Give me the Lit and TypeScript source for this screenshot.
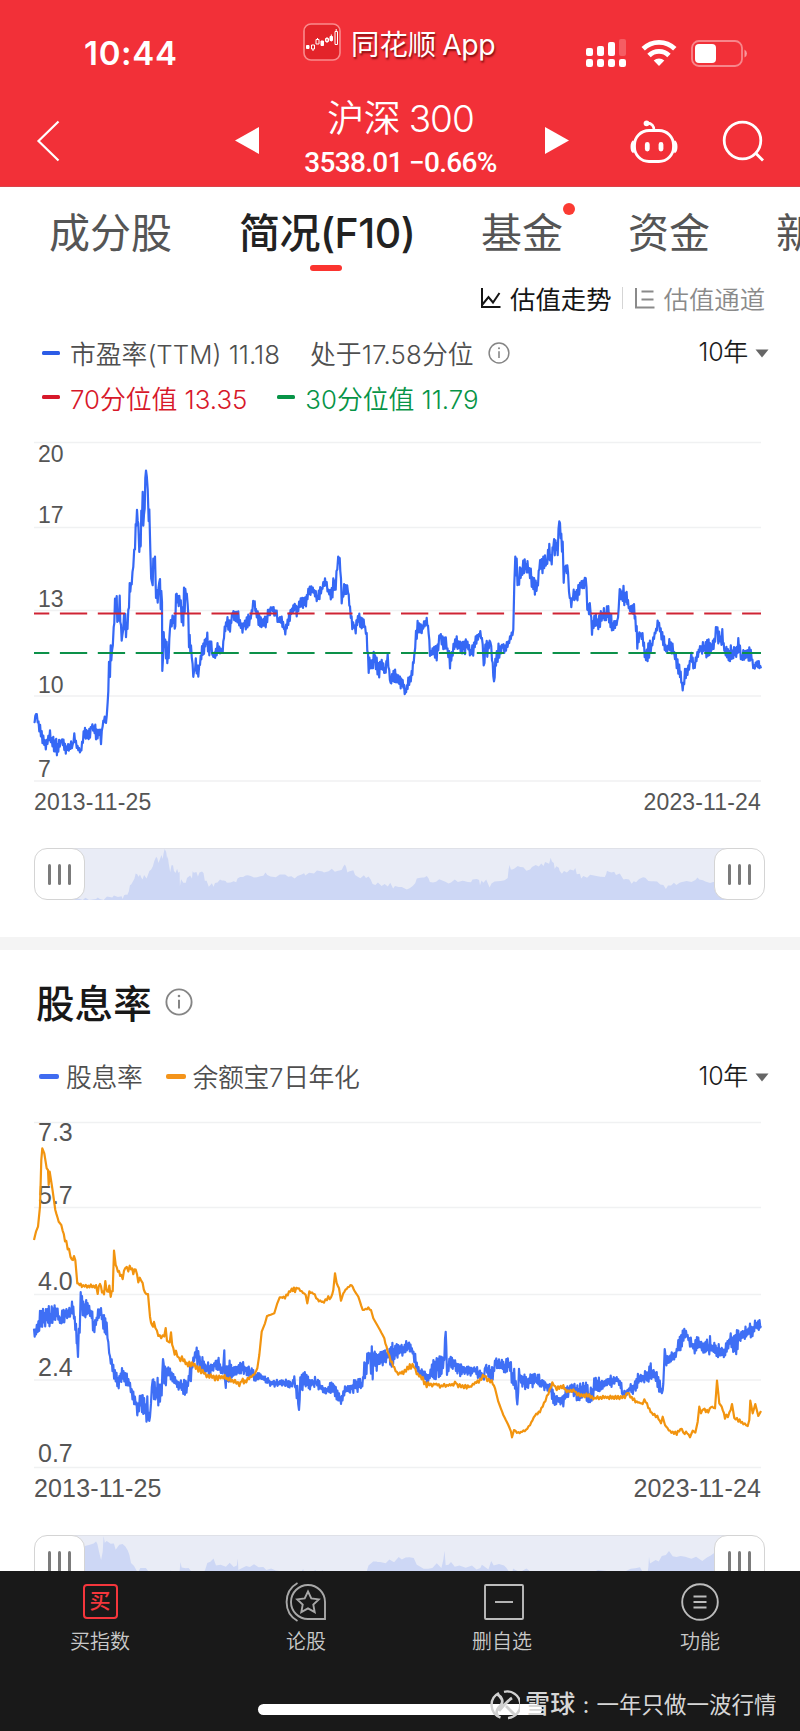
import { LitElement, html, svg, css } from "lit";
import { customElement, property } from "lit/decorators.js";

// Knots are [x, y, spread]; spread is the half-height of the daily noise around the knot.
type Knot = number[];

const parse = (s: string, dx: number): Knot[] =>
  s.trim().split(/\s+/).map((k) => {
    const [x, y, a] = k.split(",").map(Number);
    return [(x + dx) / 3, y / 3, (a || 0) / 3];
  });

const PE = [
  ...parse(`42,880,3 48,850,4 58,890,10 70,935,12 80,945,12 90,915,8 100,945,14 115,955,14 124,930,8 135,955,10 158,950,10 163,915,4 170,950,8 182,965,6
  193,912,12 210,915,10 215,890,8 228,905,14 240,905,12 243,940,5 248,885,6 254,865,6 258,880,3 263,820,3 267,720,15 270,690,30 276,670,20 281,600,20 285,540,30
  290,525,20 294,590,20 299,530,20 303,600,20 307,620,6 312,560,15 320,590,25 325,545,10 329,475,15 335,460,6 340,400,10 345,330,20 351,245,6 355,290,20 358,345,12
  364,300,35 368,210,15 372,300,25 374,200,20 378,120,2 383,165,10 386,290,10 388,230,10 391,370,20 396,490,20 400,400,20 405,385,4 408,490,20 413,510,10 418,450,10
  422,500,20 426,500,10 427,730,4 431,630,20 438,660,25 446,680,8 450,590,10 460,565,15 466,600,8 468,490,8 472,505,12 480,510,20 485,560,20 490,530,40 498,490,5
  503,520,10 507,630,20 513,650,10 520,735,12 530,695,20 535,735,10 540,690,12 548,665,12 556,635,18 562,630,15 568,650,15 574,640,10 578,680,8 590,665,12 600,660,15
  608,665,6 612,610,8 620,575,8 630,590,14 638,550,8 645,560,12 655,560,10 665,595,8 675,580,12 685,575,12 695,555,10 702,510,6 708,545,8 718,580,15 735,580,12
  748,545,10 752,535,8 765,545,8 775,570,10 785,575,10 796,605,6 805,570,10 818,535,12 826,525,10 830,550,8 842,520,12 858,520,10 867,480,8 885,485,8 890,510,8
  905,480,10 915,450,10 925,485,15 935,490,18 940,465,15 947,470,12 952,400,10 957,380,5 961,410,12 965,515,10 970,480,15 984,480,15 990,540,15 997,580,15
  1007,595,10 1018,560,12 1025,590,12 1033,580,12 1040,620,8 1046,705,15 1055,705,15 1063,680,12 1075,720,15 1085,705,12 1095,730,10 1103,680,5 1112,765,12
  1118,735,12 1130,740,12 1140,755,15`, 60),
  ...parse(`8,760,10 16,790,6 25,760,10 35,735,12 43,680,10 48,615,18 55,590,15 65,600,20 72,585,12 80,570,8 86,600,8 90,670,12 100,665,14 110,670,15 120,615,8
  130,645,12 140,650,15 150,695,12 158,665,12 170,630,10 180,655,15 195,650,12 200,640,10 212,670,12 222,660,12 227,630,8 241,610,8 248,635,8 251,715,6 256,650,15
  262,660,25 271,630,8 276,680,10 282,758,5 288,680,15 298,665,15 308,645,12 318,655,12 330,630,8 340,600,5 343,450,8 346,385,3 350,440,30 355,470,20 362,430,15
  372,410,15 380,410,15 390,430,18 400,470,15 412,465,12 418,410,12 430,395,18 440,400,18 448,370,15 455,390,15 460,345,18 473,350,22 478,270,8 482,320,12 488,360,15
  491,440,15 496,410,8 504,420,15 507,490,10 514,520,12 521,490,15 530,500,15 540,465,12 552,465,12 557,438,4 562,530,12 572,535,10 576,600,8 583,570,12 595,585,15
  605,555,15 625,555,15 638,585,12 652,575,10 656,540,8 659,475,4 663,500,18 673,495,20 682,505,15 688,540,12 700,530,12 706,565,12 712,640,25 720,610,10 730,630,15
  738,685,12 745,665,20 752,660,15 762,620,10 775,580,8 782,600,10 792,640,12 800,660,12 808,645,12 820,660,10 830,700,12 840,720,15 848,775,6 855,735,20 865,715,15
  874,680,8 882,710,8 892,680,8 900,655,15 915,655,15 930,655,15 943,640,15 950,585,8 955,630,15 967,625,15 975,665,12 990,670,15 1000,675,18 1015,650,15
  1025,690,12 1035,670,12 1050,670,12 1055,685,10 1062,715,10 1072,700,8 1083,715,8`, 1200),
];

const DIVIDEND = [
  ...parse(`42,660,10 48,668,10 60,630,20 80,622,20 95,620,18 108,605,12 122,635,14 135,610,14 150,615,12 158,585,15 162,620,12 168,660,25 174,735,6 179,640,50
  182,555,5 186,590,20 192,600,18 205,600,16 215,615,12 221,645,18 232,625,12 243,605,12 252,640,15 260,655,12 265,700,10 270,745,15 280,785,15 292,820,15
  300,800,15 308,785,12 318,800,14 330,825,12 340,860,12 352,890,15 362,880,15 370,885,15 382,905,28 390,930,6 393,870,10 398,805,4 402,850,25 415,845,22
  425,850,12 429,745,4 433,800,20 445,785,15 455,800,12 465,815,10 478,825,12 490,830,15 502,835,10 508,800,10 515,770,25 525,735,18 535,735,22 543,765,15
  558,775,12 575,775,12 587,760,12 600,775,15 610,785,20 613,720,2 615,815,15 622,785,20 640,785,15 652,780,8 665,770,10 680,782,8 695,790,10 705,802,8
  720,800,6 735,808,5 755,820,6 775,820,6 800,820,6 815,825,8 823,805,10 828,845,15 832,850,15 837,903,2 841,825,18 852,815,18 862,815,12 870,825,8 885,815,8
  900,830,8 918,845,10 930,830,12 945,840,10 957,865,10 965,870,10 975,840,12 988,835,12 1000,830,12 1015,825,12 1025,830,10 1033,785,20 1048,735,15
  1058,765,35 1062,740,12 1070,755,15 1088,748,15 1100,735,12 1115,735,22 1130,720,18`, 60),
  ...parse(`0,720,12 12,720,12 25,705,10 38,725,12 48,760,12 58,790,15 70,790,12 85,805,12 98,780,20 112,770,22 127,780,20 133,740,15 137,662,2 141,780,15 150,760,12
  158,755,12 170,775,12 185,780,10 205,785,8 225,778,8 240,795,12 252,800,12 257,765,5 263,785,12 278,795,12 287,745,10 295,765,15 312,770,12 328,765,12 335,800,20
  345,810,20 352,885,4 357,790,10 365,815,12 380,815,12 400,805,14 415,815,12 440,828,10 452,840,10 460,865,12 475,870,12 490,870,16 500,845,12 515,835,10
  530,845,14 545,845,14 560,845,20 570,865,18 580,840,20 590,825,12 610,820,12 630,815,12 650,808,8 662,820,8 668,855,8 680,850,8 690,835,10 705,830,12 720,805,15
  735,805,12 750,785,15 765,795,14 775,820,15 788,850,5 792,780,5 794,710,5 797,750,12 815,740,14 825,735,12 835,710,14 848,685,15 858,670,10 870,695,14 882,715,10
  895,695,12 910,715,12 930,712,18 945,715,12 965,730,14 980,720,12 992,690,12 1002,700,30 1015,685,14 1030,675,12 1045,665,16 1055,665,12 1065,648,10 1083,648,10`, 1200),
];

const YUEBAO = [
  ...parse(`42,390 48,365 54,350 60,290 64,150 67,115 73,130 80,175 84,180 86,225 89,185 97,235 106,300 116,335 124,345 135,390,4 147,420,5 156,455,4 162,440,4 166,450
  172,520 182,525,3 205,530,4 228,530,4 233,545,4 240,520,4 246,545,4 252,550,4 256,515,3 262,550,5 268,535,5 272,558,3 278,540,3 282,422 287,465 297,490,4 308,505,4
  316,470,6 325,480,6 333,470,5 340,485,5 347,475,5 355,515,5 364,510,5 375,550,3 384,552 390,620 396,650,3 402,640,3 415,675,5 428,685,8 437,665,8 445,705,8
  453,680,8 460,720,8 468,725,6 477,745,5 490,745,5 500,760,4 520,762,8 535,775,7 560,795,4 585,805,4 610,800,4 625,808,4 645,815,4 658,825,4 665,812,4 675,815,3
  695,800,3 705,790 712,775 718,735 725,665 735,640 741,618 763,610 772,580 779,562 795,562,2 815,540,3 825,538,5 833,533,5 845,545,3 857,555 862,580 868,545,2
  880,550,2 893,570,2 912,577,2 925,560,3 933,565,3 940,540 945,490 950,520 957,535 963,572 970,550 980,535,3 995,525,2 1005,545 1015,560 1028,600 1045,595,3
  1053,600 1060,625 1080,660 1093,685 1103,725,4 1112,750,3 1123,775,2 1135,793,2`, 60),
  ...parse(`0,790,2 10,788,3 22,775,5 33,770,6 42,770,4 50,790,3 65,805,5 80,825,5 105,822,3 120,828,3 145,826,3 160,825,2 165,815 175,828,3 200,830,4 210,830,3
  222,820,3 240,812,4 253,798,5 262,810,4 275,815,3 285,835 295,875 310,915 325,945 333,965 336,982 342,960 355,970,2 378,960,2 390,945,2 405,915,2 420,905,2
  432,880,2 445,850,2 457,820,2 470,835,4 490,830,5 500,845,4 520,840,4 540,858,3 555,855,4 580,865,4 605,862,3 650,862,3 675,862,3 683,848,2 695,865,3 710,875,3
  728,882 733,868 745,890,3 755,910,3 772,920,3 783,940 788,920 795,945 810,965,2 830,970,4 845,955,3 850,970,3 862,968,2 870,982 878,962 886,968 893,935 898,890
  903,910 910,895,4 925,905,4 933,890,3 945,895 951,812 958,880 965,890 975,922,3 988,915,4 996,882 1003,925,2 1015,930,3 1030,940,3 1043,948 1048,930 1051,872
  1058,910 1066,882 1075,918 1083,903`, 1200),
];

// Fills the gaps between knots with evenly spaced samples and seeded noise.
function sample(knots: Knot[], step = 0.75): [number, number][] {
  let seed = 7;
  const rnd = () => (seed = (seed * 16807) % 2147483647) / 2147483647;
  const out: [number, number][] = [];
  let sign = 1;
  for (let i = 0; i < knots.length - 1; i++) {
    const [x0, y0, a0] = knots[i];
    const [x1, y1, a1] = knots[i + 1];
    const n = Math.max(1, Math.round((x1 - x0) / step));
    for (let j = 0; j < n; j++) {
      const t = j / n;
      sign = -sign;
      out.push([x0 + (x1 - x0) * t, y0 + (y1 - y0) * t + sign * (0.4 + 1.5 * rnd() ** 1.5) * (a0 + (a1 - a0) * t)]);
    }
  }
  const last = knots[knots.length - 1];
  out.push([last[0], last[1]]);
  return out;
}

const toPoints = (pts: [number, number][]) => pts.map(([x, y]) => `${x.toFixed(1)},${y.toFixed(1)}`).join(" ");

const infoIcon = (size: number) => html`<svg width=${size} height=${size} viewBox="0 0 24 24" fill="none" stroke="#858585">
  <circle cx="12" cy="12" r="10.8" stroke-width="1.6" /><path d="M12 10v7.5" stroke-width="1.7" />
  <circle cx="12" cy="6.8" r="1.1" fill="#858585" stroke="none" /></svg>`;

@customElement("range-slider")
class RangeSlider extends LitElement {
  @property({ attribute: false }) knots: Knot[] = [];
  @property({ type: Number }) top = 0;
  @property({ type: Number }) scale = 1;

  static styles = css`
    :host { display: flex; height: 52px; margin: 0 35px 0 34px; position: relative; justify-content: space-between; flex: none; }
    .track { flex: 1; margin: 0 26px; height: 51px; border: solid #dfe1e8; border-width: 1px 0 0; background: #e9ecf6; }
    .track svg { display: block; width: 679px; height: 51px; }
    .handle { position: absolute; top: 0; width: 49px; height: 50px; border: 1px solid #d4d4d4; border-radius: 13px;
      background: #fff; display: flex; align-items: center; justify-content: center; gap: 7px; }
    .start { left: 0; }
    .end { right: 0; }
    .grip { width: 3px; height: 21px; border-radius: 2px; background: #7b7b7b; }
  `;

  render() {
    const pts = this.knots.map(([x, y, a], i) => [(x - 34) * 0.934, Math.min(51, Math.max(0, (y + (i % 2 ? a : -a) * 0.6 - this.top) * this.scale))] as [number, number]);
    const handle = (side: string) => html`<div class="handle ${side}"><i class="grip"></i><i class="grip"></i><i class="grip"></i></div>`;
    return html`<div class="track"><svg viewBox="0 0 679 51">
        <polygon points="0,51 ${toPoints(pts)} 679,51" fill="#cdd7f5" /></svg></div>
      ${handle("start")}${handle("end")}`;
  }
}

@customElement("app-root")
class AppRoot extends LitElement {
  static styles = css`
    :host { display: flex; flex-direction: column; width: 800px; height: 1731px; overflow: hidden; background: #fff;
      font-family: Inter, "Noto Sans CJK SC", sans-serif; color: #4f4f4f; }
    * { box-sizing: border-box; }
    svg { display: block; flex: none; }
    .row { display: flex; align-items: center; flex: none; white-space: nowrap; }
    .push { margin-left: auto; }

    .header { background: #f23038; height: 187px; color: #fff; flex: none; border-bottom: 1px solid #d9434a; }
    .status { height: 95px; padding: 11px 53px 0 84px; }
    .clock { font-size: 33px; font-weight: 600; width: 219px; letter-spacing: 0.7px; }
    .brand { height: 40px; margin-top: -22px; gap: 10px; font-size: 28.4px; text-shadow: 1px 2px 2px rgba(90, 0, 0, .75); letter-spacing: 0; }
    .brand-latin { letter-spacing: -0.4px; margin-left: -2px; }
    .signals { gap: 14px; }
    .nav { height: 91px; padding: 0 36px 0 36px; }
    .prev { margin-left: 175px; }
    .quote { width: 287px; display: flex; flex-direction: column; align-items: center; }
    .name { font-size: 37px; line-height: 48px; font-weight: 350; letter-spacing: -0.3px; margin-top: -6px; margin-left: -2px; }
    .name-num { letter-spacing: -1px; margin-left: -2px; }
    .price { font: 500 28px/34px Roboto, sans-serif; letter-spacing: -0.7px; margin: 3px 0 0 -2px; }
    .next { margin-left: 1px; }
    .robot { margin-left: 60px; }
    .search { margin-left: 43px; }

    .tabs { height: 89px; padding-left: 49px; font-size: 41px; align-items: flex-start; color: #555; overflow: hidden; }
    .tab { position: relative; height: 90px; line-height: 93px; }
    .tab.active { color: #222; font-weight: 500; margin-left: 67px; width: 176px; letter-spacing: -0.5px; }
    .tab.active::after { content: ""; position: absolute; left: 71px; top: 78px; width: 32px; height: 6px; border-radius: 3px; background: #fb342f; }
    .fund { margin-left: 66px; }
    .fund::after { content: ""; position: absolute; right: -12px; top: 16px; width: 12px; height: 12px; border-radius: 6px; background: #fb3b33; }
    .money { margin-left: 65px; }
    .news { margin-left: 66px; }

    .modes { height: 44px; padding: 0 34px 0 480px; font-size: 25.4px; }
    .mode { display: flex; align-items: center; gap: 9px; color: #151515; }
    .mode.off { color: #8a8a8a; font-weight: 350; }
    .rule { width: 1px; height: 22px; background: #d5d5d5; margin: 0 11px 0 10px; }

    .legend { font-size: 25.8px; height: 28px; padding: 0 31px 0 42px; margin: -2px 0 19px; font-weight: 400; letter-spacing: 0; }
    .legend.first { height: 65px; margin: 0; }
    .dash { width: 18px; height: 4px; border-radius: 1.5px; background: currentColor; margin-right: 10px; }
    .blue { color: #2c5ce6; }
    .red { color: #d7182a; }
    .green { color: #079447; }
    .label { color: #4f4f4f; font-weight: 350; }
    .hue { font-weight: 350; }
    .gap-wide { margin-left: 30px; letter-spacing: 0.15px; }
    .gap-info { margin-left: 14px; }
    .gap-green { margin-left: 30px; }
    .period { color: #1c1c1c; font-size: 25px; font-weight: 350; letter-spacing: -0.3px; gap: 7px; margin-top: -5px; }
    .period svg { position: relative; top: 3px; }
    .level { margin-top: -2px; }

    .chart text { font-family: "Liberation Sans", Arial, sans-serif; fill: #555; }
    .dates { font: 23px/30px "Liberation Sans", Arial, sans-serif; letter-spacing: .15px; color: #555; justify-content: space-between; padding: 0 39px 0 34px; height: 63px; align-items: flex-start; padding-top: 2px; }
    .dates.large { font-size: 25px; height: 64px; }
    .band { height: 13px; background: #f4f4f4; margin-top: 37px; flex: none; }
    .heading { height: 101px; padding-left: 36px; gap: 13px; font-size: 38.6px; font-weight: 500; color: #181818; letter-spacing: 0; }
    .heading svg { margin-top: 3px; }
    .legend.second { height: 50px; padding-left: 39px; margin: -1px 0 10px; letter-spacing: -0.3px; }
    .thick { width: 20px; height: 5px; border-radius: 2px; margin-right: 7px; margin-top: 3px; }
    .royal { color: #406cf0; }
    .orange { color: #f4941a; }
    .gap-orange { margin-left: 23px; }
    .content { height: 1384px; overflow: hidden; flex: none; display: flex; flex-direction: column; }

    .dock { background: #191919; height: 160px; flex: none; position: relative; color: #c9c9c9; }
    .actions { display: grid; grid-template-columns: 200px 212px 180px 216px; padding-top: 11px; height: 84px; }
    .action { display: flex; flex-direction: column; align-items: center; gap: 5px; font-size: 20px; line-height: 31px; font-weight: 350; }
    .bubble { margin-right: 3px; }
    .minus { margin-left: 3px; }
    .buy { width: 35px; height: 35px; margin: 2px 0 3px; border: 2px solid #f5363c; border-radius: 4px; color: #f5363c; font-size: 21px; line-height: 30px; text-align: center; font-weight: 500; }
    .home { position: absolute; left: 258px; top: 133px; width: 284px; height: 11px; border-radius: 6px; background: #fff; }
    .mark { position: absolute; left: 490px; top: 117px; height: 33px; font-size: 22.5px; line-height: 29px; color: #d6d6d6; gap: 5px; }
    .mark span { margin-top: -1px; }
    .site { font-size: 25px; font-weight: 500; letter-spacing: .3px; }
    .colon { width: 11px; text-align: center; }
  `;

  private chart(bottom: number, grid: number[], labels: [string, number][], size: number, body: unknown) {
    return html`<svg class="chart" width="800" height=${bottom} viewBox="0 0 800 ${bottom}">
      ${grid.map((y) => svg`<path d="M34 ${y}H761" stroke="#f0f1f2" stroke-width="1.3" />`)}
      ${labels.map(([t, y]) => svg`<text x="38" y=${y} font-size=${size}>${t}</text>`)}
      ${body}</svg>`;
  }

  private line(knots: Knot[], color: string, step = 0.75, width = 2.2) {
    return svg`<polyline points=${toPoints(sample(knots, step))} fill="none" stroke=${color} stroke-width=${width} stroke-linejoin="round" />`;
  }

  private period(cls = "") {
    return html`<div class="row push period ${cls}"><span>10年</span>
      <svg width="14" height="9" viewBox="0 0 14 9"><path d="M0.5 0.5h13L7 8.5z" fill="#666" /></svg></div>`;
  }

  render() {
    return html`
      <div class="header">
        <div class="row status">
          <div class="clock">10:44</div>
          <div class="row brand">
            <svg width="38" height="38" viewBox="0 0 38 38">
              <rect x="1" y="1" width="36" height="36" rx="7" fill="#e3242a" stroke="#fa8a8c" stroke-width="1.6" />
              <g fill="#fff" stroke="#fff" stroke-width="1">
                <path d="M3.500 22.500h2.500v3h-2.500zM18 18h2.500v4.500h-2.500zM27 13.500h2.500v4h-2.500zM28.300 11.500v7" />
                <path fill="none" d="M8.500 22h3v4h-3zM10 26v2M13 16.500h3v4.500h-3zM14.500 15v1.500M22.500 15.500h3v3h-3zM24 14v6M32 8.500h2.500v13H32zM33.200 6v2" />
              </g>
            </svg>
            <div>同花顺 <span class="brand-latin">App</span></div>
          </div>
          <div class="row signals push">
            <svg width="41" height="30" viewBox="0 0 41 30" fill="#fff">
              <rect x="0" y="10" width="7" height="8" rx="2" /><rect x="11" y="8" width="7" height="10" rx="2" />
              <rect x="22" y="4" width="7" height="14" rx="2" /><rect x="33" y="1" width="7" height="17" rx="2" opacity=".22" />
              <rect x="0" y="21" width="7" height="8" rx="2.200" /><rect x="11" y="21" width="7" height="8" rx="2.200" />
              <rect x="22" y="21" width="7" height="8" rx="2.200" /><rect x="33" y="21" width="7" height="8" rx="2.200" />
            </svg>
            <svg width="36" height="28" viewBox="0 0 36 28" fill="none" stroke="#fff" stroke-width="4.800">
              <path d="M2.200 9.800a22.500 22.500 0 0 1 31.600 0" /><path d="M8 16.500a14 14 0 0 1 20 0" />
              <path d="M18 27l-5.300-5.400a7.500 7.500 0 0 1 10.600 0z" fill="#fff" stroke="none" />
            </svg>
            <svg width="56" height="27" viewBox="0 0 56 27">
              <rect x="1" y="1" width="50" height="25" rx="7" fill="none" stroke="#fff" stroke-opacity=".42" stroke-width="1.800" />
              <rect x="4" y="4" width="21" height="19" rx="4" fill="#fff" />
              <path d="M53.500 9.500a4.500 4.500 0 0 1 0 8z" fill="#fff" opacity=".5" />
            </svg>
          </div>
        </div>
        <div class="row nav">
          <svg width="24" height="42" viewBox="0 0 24 42"><path d="M22.500 1.500L2.500 21l20 19.500" fill="none" stroke="#fff" stroke-width="2.200" /></svg>
          <svg class="prev" width="24" height="27" viewBox="0 0 24 27"><path d="M0 13.500L24 0v27z" fill="#fff" /></svg>
          <div class="quote">
            <div class="name">沪深 <span class="name-num">300</span></div>
            <div class="price">3538.01 −0.66%</div>
          </div>
          <svg class="next" width="24" height="27" viewBox="0 0 24 27"><path d="M24 13.500L0 0v27z" fill="#fff" /></svg>
          <svg class="robot" width="50" height="46" viewBox="0 0 50 46" fill="none" stroke="#fff" stroke-width="2.800">
            <path d="M25 13c.5-5-2.500-8-7-7.800" /><circle cx="17.500" cy="5.300" r="2" fill="#fff" stroke-width="1.800" />
            <rect x="5.500" y="12.500" width="39" height="31" rx="14.500" />
            <path d="M5 23.500c-2.500 1.500-2.500 9 0 10.500M45 23.500c2.500 1.500 2.500 9 0 10.500" stroke-width="3.200" />
            <path d="M18.300 26.500v4.500M32 26.500v4.500" stroke-width="4.800" stroke-linecap="round" />
          </svg>
          <svg class="search" width="42" height="42" viewBox="0 0 42 42" fill="none" stroke="#fff" stroke-width="2.800">
            <circle cx="20.500" cy="20.500" r="18.300" /><path d="M34 33.500l7 7" />
          </svg>
        </div>
      </div>
      <div class="content">
        <div class="row tabs">
          <div class="tab">成分股</div>
          <div class="tab active">简况(F10)</div>
          <div class="tab fund">基金</div>
          <div class="tab money">资金</div>
          <div class="tab news">新</div>
        </div>
        <div class="row modes">
          <div class="mode">
            <svg width="21" height="21" viewBox="0 0 21 21" fill="none" stroke="#151515" stroke-width="2"><path d="M2 0v19h18.500M2 17l6.500-8 4.500 5.500L19.500 5" /></svg>
            <span>估值走势</span>
          </div>
          <div class="rule"></div>
          <div class="mode off">
            <svg width="21" height="21" viewBox="0 0 21 21" fill="none" stroke="#8a8a8a" stroke-width="2"><path d="M2 0v19.500h18.500M7.500 3.500h12M7.500 11.500h12" /></svg>
            <span>估值通道</span>
          </div>
        </div>
        <div class="row legend first">
          <i class="dash blue"></i><span class="label">市盈率(TTM) 11.18</span>
          <span class="label gap-wide">处于17.58分位</span>
          <span class="gap-info">${infoIcon(22)}</span>
          ${this.period()}
        </div>
        <div class="row legend">
          <span class="row red"><i class="dash"></i><span class="hue">70分位值 13.35</span></span>
          <span class="row green gap-green"><i class="dash"></i><span class="hue">30分位值 11.79</span></span>
        </div>
        ${this.chart(355, [12.5, 97.5, 180.5, 266, 351], [["20", 32], ["17", 92.5], ["13", 177], ["10", 262.5], ["7", 347]], 23, svg`
          ${this.line(PE, "#3568f5")}
          <path d="M34 183.500H761" stroke="#cf2434" stroke-width="2.200" stroke-dasharray="27.300 10.600" stroke-dashoffset="12" />
          <path d="M34 223H761" stroke="#0c9149" stroke-width="2.200" stroke-dasharray="27.300 10.600" stroke-dashoffset="12" />`)}
        <div class="row dates"><span>2013-11-25</span><span>2023-11-24</span></div>
        <range-slider .knots=${PE} .top=${40} .scale=${0.182}></range-slider>
        <div class="band"></div>
        <div class="row heading"><span>股息率</span>${infoIcon(28)}</div>
        <div class="row legend second">
          <i class="dash thick royal"></i><span class="label">股息率</span>
          <span class="row gap-orange"><i class="dash thick orange"></i><span class="label">余额宝7日年化</span></span>
          ${this.period("level")}
        </div>
        ${this.chart(361, [12.5, 97.5, 184.5, 270, 357.5], [["7.3", 30.5], ["5.7", 93.5], ["4.0", 179.5], ["2.4", 266], ["0.7", 352]], 25, svg`
          ${this.line(DIVIDEND, "#3f6ff5")}${this.line(YUEBAO, "#f2940f", 1.3, 2.2)}`)}
        <div class="row dates large"><span>2013-11-25</span><span>2023-11-24</span></div>
        <range-slider .knots=${DIVIDEND} .top=${184} .scale=${0.4}></range-slider>
      </div>
      <div class="dock">
        <div class="actions">
          <div class="action"><div class="buy">买</div><span>买指数</span></div>
          <div class="action">
            <svg class="bubble" width="42" height="40" viewBox="0 0 42 40" fill="none" stroke="#a8a8a8" stroke-width="1.900">
              <path d="M24 3a17 17 0 1 0 0 34h17V20a17 17 0 0 0-17-17z" /><path d="M13.500 1a22 22 0 0 0 0 38" />
              <path d="M24 9.500l3.300 6.900 7.500 1-5.500 5.200 1.400 7.500-6.700-3.700-6.700 3.700 1.400-7.500-5.500-5.200 7.500-1z" />
            </svg><span>论股</span>
          </div>
          <div class="action">
            <svg class="minus" width="40" height="40" viewBox="0 0 40 40" fill="none" stroke="#bcbcbc" stroke-width="1.900"><rect x="1" y="3" width="38" height="34" rx="1" /><path d="M11 20h18" /></svg><span>删自选</span>
          </div>
          <div class="action">
            <svg width="38" height="40" viewBox="0 0 38 40" fill="none" stroke="#bcbcbc" stroke-width="1.900"><circle cx="19" cy="20" r="17.800" /><path d="M12.500 14.500h13M12.500 20h13M12.500 25.500h13" /></svg><span>功能</span>
          </div>
        </div>
        <div class="home"></div>
        <div class="row mark">
          <svg width="30" height="30" viewBox="0 0 30 30" fill="none" stroke="#d0d0d0" stroke-width="2.400">
            <path d="M9 3a13.300 13.300 0 0 0 1.500 24.500M14 1.800A13.300 13.300 0 1 1 18 28" /><path d="M7 4c5 3 7 8 3.500 11.500S5 22 8 26M22 8c-5 3-9 8-13 13M16 16l9 9" stroke-width="2.800" />
          </svg>
          <span class="site">雪球</span><span class="colon">:</span><span>一年只做一波行情</span>
        </div>
      </div>`;
  }
}
